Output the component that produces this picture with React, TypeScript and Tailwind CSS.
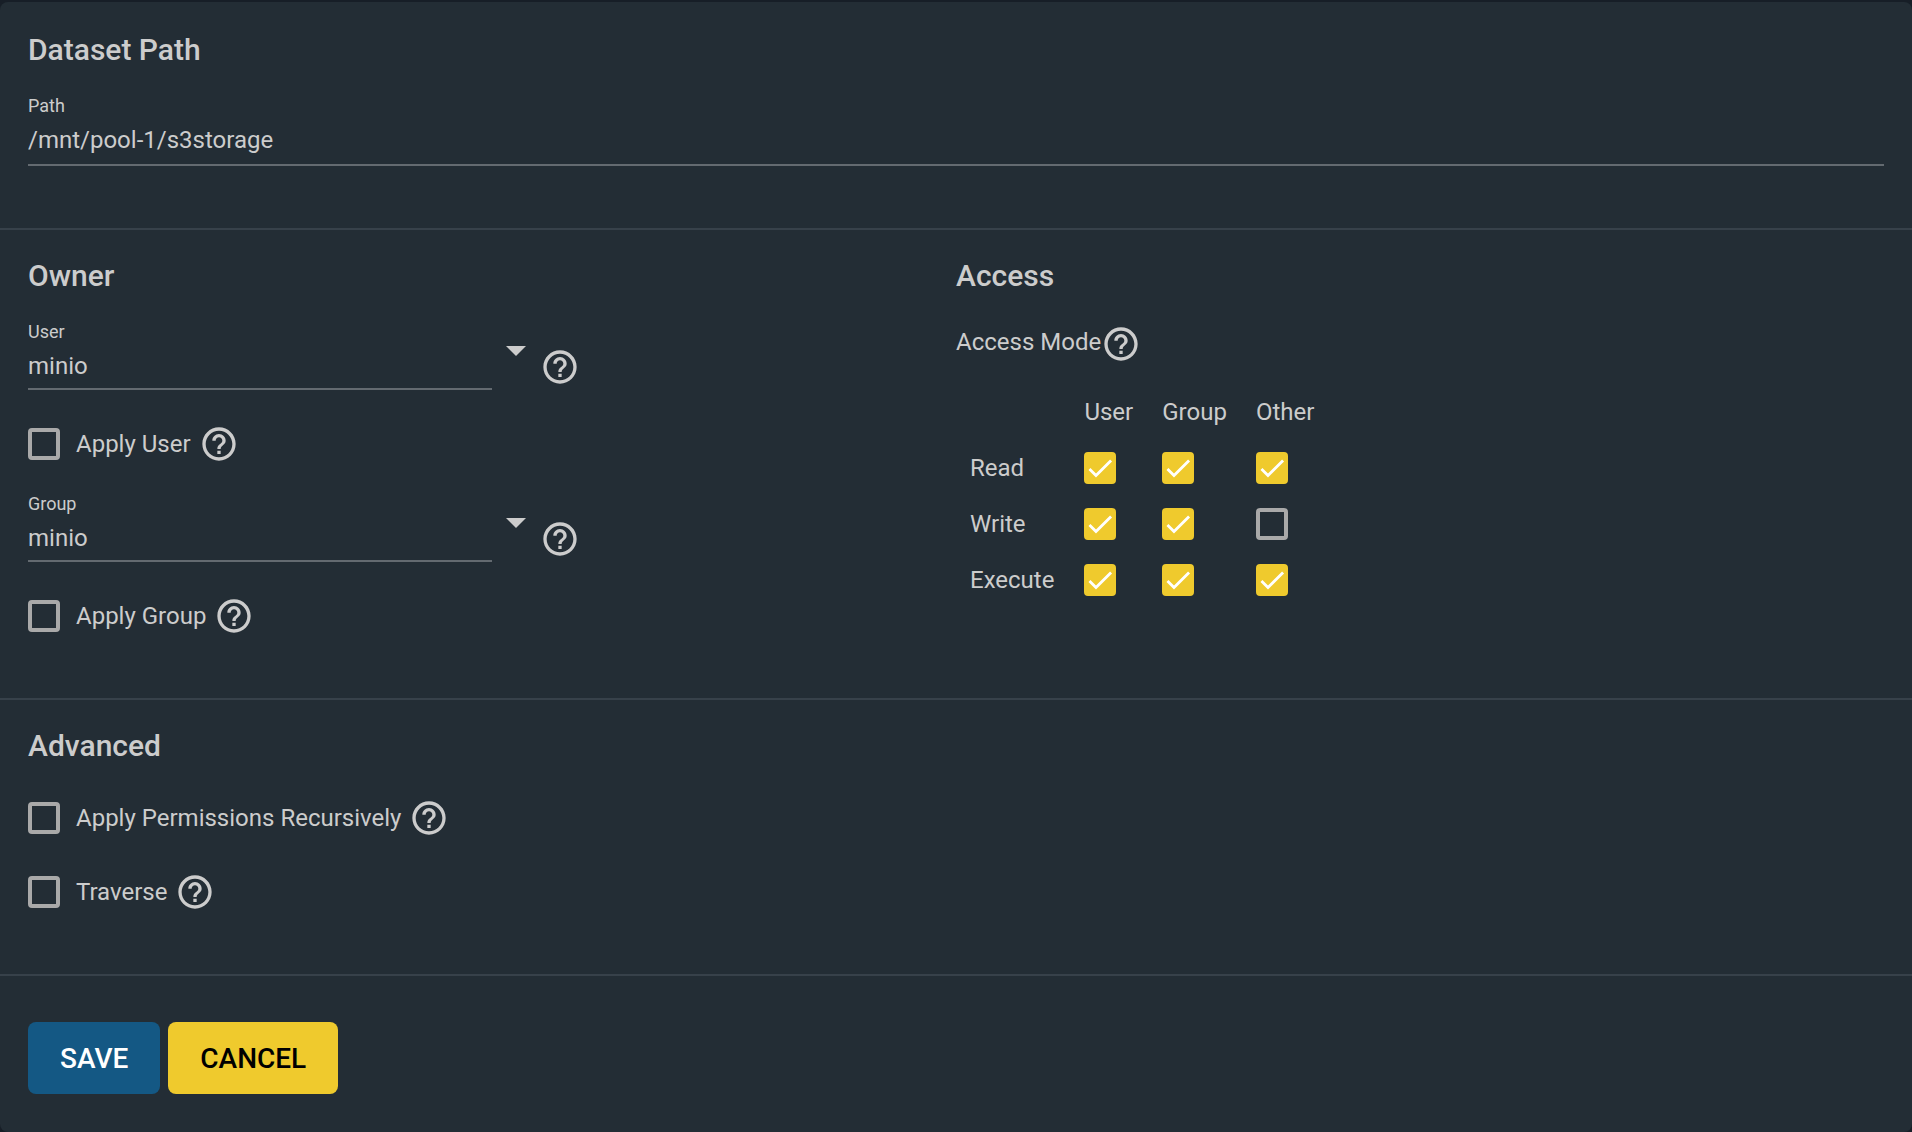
import { useId, useState } from "react";
import type { ReactNode } from "react";

function HelpButton({ topic }: { topic: string }) {
  return (
    <button type="button" aria-label={`Help: ${topic}`} className="size-10 shrink-0">
      <svg viewBox="0 0 24 24" className="size-10 fill-current" aria-hidden="true">
        <path d="M11 18h2v-2h-2v2zm1-16C6.48 2 2 6.48 2 12s4.48 10 10 10 10-4.48 10-10S17.52 2 12 2zm0 18c-4.41 0-8-3.59-8-8s3.59-8 8-8 8 3.59 8 8-3.59 8-8 8zm0-14c-2.21 0-4 1.79-4 4h2c0-1.1.9-2 2-2s2 .9 2 2c0 2-3 1.75-3 5h2c0-2.25 3-2.5 3-5 0-2.21-1.79-4-4-4z" />
      </svg>
    </button>
  );
}

function Checkbox({ id, label, defaultChecked = false }: { id?: string; label?: string; defaultChecked?: boolean }) {
  return (
    <span className="relative block size-8 shrink-0">
      <input
        id={id}
        type="checkbox"
        aria-label={label}
        defaultChecked={defaultChecked}
        className="peer block size-8 appearance-none rounded-sm border-4 border-[#a9a9a9] checked:border-[#efca2d] checked:bg-[#efca2d]"
      />
      <svg
        viewBox="0 0 24 24"
        className="pointer-events-none absolute inset-0 hidden size-8 peer-checked:block"
        aria-hidden="true"
      >
        <path d="M4.1 12.7 9 17.6 20.3 6.3" fill="none" stroke="#fff" strokeWidth="2.1" />
      </svg>
    </span>
  );
}

function CheckRow({ label }: { label: string }) {
  const id = useId();
  return (
    <div className="flex h-10 items-center">
      <Checkbox id={id} />
      <label htmlFor={id} className="pr-2 pl-4">
        {label}
      </label>
      <HelpButton topic={label} />
    </div>
  );
}

function OwnerField({ label }: { label: string }) {
  const id = useId();
  const [value, setValue] = useState("minio");
  return (
    <div className="flex items-start">
      <div className="w-1/2">
        <label htmlFor={id} className="block text-lg/6">
          {label}
        </label>
        <input
          id={id}
          type="text"
          role="combobox"
          aria-expanded="false"
          value={value}
          onChange={(e) => setValue(e.target.value)}
          className="mt-1 block h-[42px] w-full border-b-2 border-[#636a70] pb-1 outline-none"
        />
      </div>
      <button
        type="button"
        aria-label={`Show ${label} options`}
        className="flex h-[62px] w-12 items-center justify-center"
      >
        <svg viewBox="0 0 20 10" className="h-2.5 w-5 fill-current" aria-hidden="true">
          <path d="M0 0h20L10 10z" />
        </svg>
      </button>
      <div className="flex pt-[27px]">
        <HelpButton topic={label} />
      </div>
    </div>
  );
}

function Heading({ children }: { children: ReactNode }) {
  return <h2 className="text-[30px]/9 font-medium">{children}</h2>;
}

const columns = ["User", "Group", "Other"];
const permissions = [
  { name: "Read", values: [true, true, true] },
  { name: "Write", values: [true, true, false] },
  { name: "Execute", values: [true, true, true] },
];

export default function App() {
  return (
    <main className="min-h-screen bg-[#171e27] pt-0.5 font-[Roboto,sans-serif] text-2xl/9 text-[#cccccc]">
      <form className="rounded-lg bg-[#232d35]" onSubmit={(e) => e.preventDefault()}>
        <section className="border-b-2 border-[#37414a] px-7 pt-[30px] pb-[62px]">
          <Heading>Dataset Path</Heading>
          <label htmlFor="path" className="mt-[26px] block text-lg/6">
            Path
          </label>
          <input
            id="path"
            type="text"
            readOnly
            value="/mnt/pool-1/s3storage"
            className="mt-1 block h-11 w-full border-b-2 border-[#636a70] pb-1.5 outline-none"
          />
        </section>

        <section className="grid grid-cols-2 border-b-2 border-[#37414a] px-7 pt-7 pb-[62px]">
          <div>
            <Heading>Owner</Heading>
            <div className="mt-[26px] flex flex-col gap-7">
              <div className="flex flex-col gap-[34px]">
                <OwnerField label="User" />
                <CheckRow label="Apply User" />
              </div>
              <div className="flex flex-col gap-[34px]">
                <OwnerField label="Group" />
                <CheckRow label="Apply Group" />
              </div>
            </div>
          </div>
          <div>
            <Heading>Access</Heading>
            <div className="mt-[30px] flex items-start">
              <span>Access Mode</span>
              <HelpButton topic="Access Mode" />
            </div>
            <table className="mt-5 ml-3.5 text-left" aria-label="Access Mode">
              <thead>
                <tr className="h-14">
                  <td />
                  {columns.map((c) => (
                    <th key={c} scope="col" className="pr-[29px] font-normal">
                      {c}
                    </th>
                  ))}
                </tr>
              </thead>
              <tbody>
                {permissions.map((p) => (
                  <tr key={p.name} className="h-14">
                    <th scope="row" className="pr-[30px] font-normal">
                      {p.name}
                    </th>
                    {p.values.map((v, i) => (
                      <td key={columns[i]}>
                        <Checkbox label={`${columns[i]} ${p.name}`} defaultChecked={v} />
                      </td>
                    ))}
                  </tr>
                ))}
              </tbody>
            </table>
          </div>
        </section>

        <section className="border-b-2 border-[#37414a] px-7 pt-7 pb-[62px]">
          <Heading>Advanced</Heading>
          <div className="mt-[34px] flex flex-col gap-[34px]">
            <CheckRow label="Apply Permissions Recursively" />
            <CheckRow label="Traverse" />
          </div>
        </section>

        <div className="flex gap-2 px-7 pt-[46px] pb-[38px] text-[28px]/9 font-medium">
          <button type="submit" className="h-18 rounded-lg bg-[#145884] px-8 pt-0.5 text-white">
            SAVE
          </button>
          <button type="button" className="h-18 rounded-lg bg-[#efca2d] px-8 pt-0.5 text-black">
            CANCEL
          </button>
        </div>
      </form>
    </main>
  );
}
